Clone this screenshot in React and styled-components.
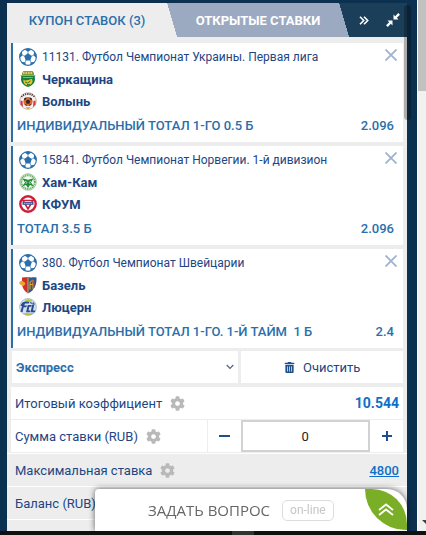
import { useState } from "react";
import styled, { createGlobalStyle } from "styled-components";
import { FaTrashAlt, FaCog } from "react-icons/fa";

const GlobalStyle = createGlobalStyle`
  * {
    box-sizing: border-box;
  }

  body {
    margin: 0;
    background-color: #0c304f;
    font-family: Roboto, "Liberation Sans", sans-serif;
    font-size: 13px;
    color: #1d4683;
    overflow: hidden;
  }

  button,
  input,
  select {
    font-family: inherit;
  }
`;

const Page = styled.div`
  display: flex;
  height: 100vh;
  padding: 3px 0 4px 7px;
`;

const Coupon = styled.main`
  flex: 1;
  min-width: 0;
  overflow: hidden;
  background-color: #ededed;
`;

const Gutter = styled.div`
  width: 10px;
`;

const PageScroll = styled.div`
  width: 9px;
  margin-top: -3px;
  border-left: 1px solid #fff;
  background-color: #f1f1f1;
  display: flex;
  flex-direction: column;
  justify-content: space-between;
`;

const PageThumb = styled.div`
  height: 91px;
  background-color: #c1c1c1;
`;

const ScrollArrow = styled.svg`
  width: 8px;
  height: 14px;
  fill: #404040;
`;

const Header = styled.header`
  display: flex;
  height: 34px;
  background-color: #1b3f58;
`;

const Tab = styled.button`
  height: 34px;
  padding: 0;
  border: 0;
  font-size: 13px;
  cursor: pointer;
  font-weight: ${(props) => (props.$active ? 500 : 700)};
  color: ${(props) => (props.$active ? "#2a6fab" : "#fff")};
  background-color: ${(props) => (props.$active ? "#ededed" : "#9ba9c1")};
  flex: ${(props) => (props.$active ? "160 1 0" : "182 1 0")};
  white-space: nowrap;

  ${(props) =>
    !props.$active &&
    `
    background: linear-gradient(to top right, #ededed 50%, #9ba9c1 51%) left / 10px 100% no-repeat,
      linear-gradient(to top right, #9ba9c1 50%, #1b3f58 51%) right / 10px 100% no-repeat,
      linear-gradient(#9ba9c1, #9ba9c1) center / calc(100% - 20px) 100% no-repeat;
  `}
`;

const HeaderTools = styled.div`
  display: flex;
  flex: 58 1 0;
`;

const IconButton = styled.button`
  display: flex;
  align-items: center;
  justify-content: center;
  padding: 0;
  border: 0;
  background: none;
  cursor: pointer;
  color: inherit;
`;

const ToolButton = styled(IconButton)`
  flex: 1;
  color: #fff;
`;

const InnerThumb = styled.div`
  position: absolute;
  top: 5px;
  right: 15px;
  width: 7px;
  height: 115px;
  border-radius: 4px;
  background-color: rgba(0, 0, 0, 0.27);
`;

const Bets = styled.ul`
  display: flex;
  flex-direction: column;
  gap: 4px;
  margin: 0;
  padding: 6px 4px 0;
  list-style: none;
`;

const BetCard = styled.li`
  height: 99px;
  padding: 3px 9px 0 4px;
  border-left: 2px solid #2a6fab;
  background-color: #fff;
`;

const BetLine = styled.div`
  display: flex;
  align-items: center;
  gap: 5px;
  height: 22px;
  padding-left: 2px;
  font-size: ${(props) => (props.$team ? "13px" : "12px")};
  font-weight: ${(props) => (props.$team ? 700 : 400)};
  white-space: nowrap;

  svg {
    flex: none;
  }
`;

const CloseButton = styled(IconButton)`
  align-self: flex-start;
  width: 12px;
  height: 18px;
  margin: 0 -3px 0 auto;
  color: #9fb2d0;
`;

const Market = styled.div`
  display: flex;
  justify-content: space-between;
  height: 28px;
  line-height: 28px;
  color: #2a6fab;
  font-weight: 500;
  white-space: pre;
`;

const Actions = styled.div`
  display: grid;
  grid-template-columns: 7fr 5fr;
  gap: 3px;
  padding: 3px 4px 4px 5px;
`;

const SelectBox = styled.label`
  display: grid;
  align-items: center;
  background-color: #fff;

  select,
  svg {
    grid-area: 1 / 1;
  }

  svg {
    justify-self: end;
    margin-right: 4px;
    pointer-events: none;
  }
`;

const TypeSelect = styled.select`
  appearance: none;
  width: 100%;
  height: 32px;
  padding: 0 4px;
  border: 0;
  background: none;
  color: #2a6fab;
  font-size: 13px;
  font-weight: 700;
`;

const ClearButton = styled(IconButton)`
  gap: 8px;
  height: 32px;
  background-color: #fff;
  font-size: 13px;

  svg {
    font-size: 11px;
    color: #1d4f8b;
  }
`;

const Row = styled.div`
  display: flex;
  align-items: center;
  justify-content: space-between;
  height: 33px;
  margin: ${(props) => (props.$grey ? "0" : "0 4px")};
  padding: ${(props) => (props.$grey ? "0 8px" : "0 4px")};
  border-bottom: 1px solid ${(props) => (props.$grey ? "#fff" : "#ededed")};
  background-color: ${(props) => (props.$grey ? "#ededed" : "#fff")};
`;

const StakeRow = styled(Row)`
  padding-right: 0;
`;

const StakeLabel = styled.div`
  display: flex;
  align-items: center;
  flex: 48 1 0;
  height: 32px;
  border-right: 1px solid #ededed;
`;

const Name = styled.span`
  display: inline-flex;
  align-items: center;
  gap: 8px;
  white-space: nowrap;

  svg {
    font-size: 15px;
    color: #b9b9b9;
  }
`;

const Total = styled.strong`
  font-size: 14px;
  color: #0f6fc6;
`;

const MaxLink = styled.a`
  font-size: 13px;
  font-weight: 500;
  color: #0f6fc6;
`;

const Stepper = styled.div`
  display: flex;
  flex: 49 1 0;
  min-width: 0;
  height: 32px;
`;

const StepButton = styled(IconButton)`
  width: 33px;
  color: #1d4f8b;
`;

const StakeInput = styled.input`
  flex: 1;
  min-width: 0;
  border: 2px solid #d2d2d2;
  background-color: #fff;
  text-align: center;
  font-size: 13px;
  color: #222;
`;

const Divider = styled.div`
  height: 1px;
  background-color: #fff;
`;

const Chat = styled.div`
  position: fixed;
  right: 19px;
  bottom: 4px;
  display: flex;
  align-items: center;
  width: 312px;
  height: 42px;
  padding-left: 53px;
  border-radius: 4px 20px 0 0;
  background-color: #fff;
  box-shadow: 0 0 6px rgba(0, 0, 0, 0.6);
  font-family: "Open Sans", "Noto Sans", sans-serif;
`;

const ChatTitle = styled.span`
  font-size: 15px;
  color: #666;
  white-space: nowrap;
`;

const Status = styled.span`
  height: 21px;
  margin-left: 12px;
  padding: 0 7px;
  border: 1px solid #ddd;
  border-radius: 5px;
  font-family: Roboto, sans-serif;
  font-size: 12px;
  line-height: 19px;
  color: #c6c6c6;
`;

const ChatToggle = styled(IconButton)`
  align-self: flex-start;
  width: 42px;
  height: 41px;
  margin-left: auto;
  border-radius: 0 36px 0 42px;
  background-color: #7aae27;
  color: #fff;
`;

const Taskbar = styled.div`
  position: fixed;
  right: 0;
  bottom: 0;
  left: 0;
  display: flex;
  justify-content: center;
  height: 4px;
  background-color: #101010;

  &::after {
    content: "";
    width: 22px;
    margin-left: 60px;
    background-color: #333;
  }
`;

function Ball() {
  return (
    <svg width="18" height="18" viewBox="0 0 18 18">
      <circle cx="9" cy="9" r="8.4" fill="#fff" stroke="#2a6fab" strokeWidth="1.1" />
      <path
        d="M9 5.300l3.800 2.800-1.500 4.400H6.700L5.200 8.100zM5.400 1.500L9 3.800l3.600-2.300C10.300.5 7.700.5 5.400 1.500zM.7 10l2.800-2.800L2.600 3.500C1 5.500.4 7.500.7 10zM17.300 10l-2.800-2.800.9-3.700c1.600 2 2.200 4 1.900 6.500zM2.300 14l4 .3.600 3c-1.900-.5-3.400-1.500-4.600-3.300zM15.700 14l-4 .3-.6 3c1.900-.5 3.400-1.500 4.600-3.300z"
        fill="#2a6fab"
      />
      <path d="M9 3v3M3 7l3 1.400M15 7l-3 1.400M7 12l-1 2.800M11 12l1 2.800" stroke="#2a6fab" strokeWidth=".6" />
    </svg>
  );
}

const crests = {
  cherkashchyna: (
    <>
      <path d="M4.500 1h9l1.500 2v3H3V3z" fill="#8d9b32" />
      <path d="M4 3h10" stroke="#f0e287" strokeWidth="1.500" strokeDasharray="1.500 1" />
      <path d="M1.500 5h15l-.8 1.500c1 5-.7 8.500-6.700 10.500-6-2-7.700-5.500-6.700-10.500z" fill="#15803c" />
      <path d="M2 5.500h14M4 7.500h10" stroke="#b9a63a" strokeWidth="1" />
      <path d="M4.500 9.500c2 2 3 .5 4.500.5s2-1.500 4-1c1.500 3-.5 6.300-4 6.300S4 12.500 4.500 9.500z" fill="#e7c32c" />
      <path d="M6 12l2.500 1 3-2M8 14.500h3" stroke="#38742b" strokeWidth="1" fill="none" />
    </>
  ),
  volyn: (
    <>
      <circle cx="9" cy="9" r="8.300" fill="#f6f1ee" stroke="#b3a5a4" strokeWidth=".8" />
      <path d="M2.500 5C5 1 13 1 15.500 5" stroke="#4c3538" strokeWidth="1.800" strokeDasharray="1.200 1" fill="none" />
      <path d="M1.500 8.500v4L4 15l-.5-6zM16.500 8.500v4L14 15l.5-6z" fill="#dd3541" />
      <circle cx="9" cy="9.500" r="4.600" fill="#e6672c" />
      <path d="M9 7.500l2.300 1.600-.9 2.700H7.600l-.9-2.700zM5 6.500l2-1 .5 1.200-2 1.800zM13 6.500l-2-1-.5 1.200 2 1.800zM5.300 12.500l2-.3.500 2zM12.700 12.500l-2-.3-.5 2z" fill="#30272a" />
      <path d="M6.500 15.300h5L9 17.300z" fill="#d4a91e" />
    </>
  ),
  hamkam: (
    <>
      <circle cx="9" cy="9" r="8.300" fill="#e2f0dc" stroke="#8ec18a" strokeWidth=".8" />
      <circle cx="9" cy="9" r="6.800" fill="none" stroke="#5aa659" strokeWidth="1.800" strokeDasharray="1 .8" />
      <circle cx="9" cy="9.300" r="5.200" fill="#fff" />
      <path d="M3.500 5.500l5 1 .5 1 .5-1 5-1-2.500 4 3 4-4-1.500L9 15l-2-3-4 1.500 3-4z" fill="#218b38" />
      <path d="M6 8l2 1.500L6.500 11M12 8l-2 1.500 1.500 1.500" stroke="#d7ecd2" strokeWidth=".8" fill="none" />
    </>
  ),
  kfum: (
    <>
      <circle cx="9" cy="9" r="7.700" fill="#fff" stroke="#cf1f37" strokeWidth="2.400" />
      <path d="M4 5.500h10L9 14z" fill="#fff" stroke="#cf1f37" strokeWidth="1.600" />
      <path d="M3.500 7h11v2.800h-11z" fill="#3e5797" />
      <path d="M5 8.400h8" stroke="#cbd5ec" strokeWidth=".8" strokeDasharray="1.500 .7" />
    </>
  ),
  basel: (
    <>
      <path d="M3 1.500L9 1v16.500C5 15 3 11.500 3 7z" fill="#cc3128" />
      <path d="M9 1c3 1 5 0 8.500.5C18 8 15.500 14.500 9 17.500z" fill="#31598f" />
      <path d="M.3 6l2.500-1.500L6.500 7 5 10l-2.500-.8L.5 8z" fill="#f0a42b" />
      <path d="M9 1v16M11 13.500V6l3-2v9M11 8.500h3" stroke="#e5a630" strokeWidth="1" fill="none" />
      <path d="M12.500 4l2.500 2v6" stroke="#cc3128" strokeWidth=".8" fill="none" />
    </>
  ),
  luzern: (
    <>
      <circle cx="9" cy="9" r="8.400" fill="#d9e1ec" stroke="#a3afc1" strokeWidth=".8" />
      <path d="M3.500 4.500c3-1.500 5-1.500 7-1L9.800 5.500H6l-.7 2H8l-.7 1.800H4.700L3.500 14H1.500L3 8H1.500l.7-1.800z" fill="#254b99" />
      <path d="M8.800 7h4l-.5 1.700h-2l-.8 3.800h2l-.6 1.800H7z" fill="#254b99" />
      <path d="M13.300 6.500h2L14 12.500h2.500l-.6 1.800H11.500z" fill="#254b99" />
      <path d="M6 2.300c2-1.300 5-1.300 7.300 0l-.8 1.200H7z" fill="#bac838" />
      <path d="M4 15.300h11L12 17H7z" fill="#afb944" />
      <path d="M11 4.500l2.500 1M14 4.500l1.500 2" stroke="#254b99" strokeWidth="1.200" />
    </>
  ),
};

function Crest({ name }) {
  return (
    <svg width="18" height="18" viewBox="0 0 18 18">
      {crests[name]}
    </svg>
  );
}

const bets = [
  {
    id: 11131,
    league: "Футбол Чемпионат Украины. Первая лига",
    teams: [
      { name: "Черкащина", crest: "cherkashchyna" },
      { name: "Волынь", crest: "volyn" },
    ],
    market: "ИНДИВИДУАЛЬНЫЙ ТОТАЛ 1-ГО 0.5 Б",
    odds: "2.096",
  },
  {
    id: 15841,
    league: "Футбол Чемпионат Норвегии. 1-й дивизион",
    teams: [
      { name: "Хам-Кам", crest: "hamkam" },
      { name: "КФУМ", crest: "kfum" },
    ],
    market: "ТОТАЛ 3.5 Б",
    odds: "2.096",
  },
  {
    id: 380,
    league: "Футбол Чемпионат Швейцарии",
    teams: [
      { name: "Базель", crest: "basel" },
      { name: "Люцерн", crest: "luzern" },
    ],
    market: "ИНДИВИДУАЛЬНЫЙ ТОТАЛ 1-ГО. 1-Й ТАЙМ  1 Б",
    odds: "2.4",
  },
];

function Bet({ bet }) {
  return (
    <BetCard>
      <BetLine>
        <Ball />
        {bet.id}. {bet.league}
        <CloseButton type="button" aria-label="Удалить">
          <svg width="12" height="12" viewBox="0 0 12 12">
            <path d="M.5.500l11 11M11.500.500l-11 11" stroke="currentColor" strokeWidth="1.800" />
          </svg>
        </CloseButton>
      </BetLine>
      {bet.teams.map((team) => (
        <BetLine key={team.name} $team>
          <Crest name={team.crest} />
          {team.name}
        </BetLine>
      ))}
      <Market>
        <span>{bet.market}</span>
        <span>{bet.odds}</span>
      </Market>
    </BetCard>
  );
}

function App() {
  const [stake, setStake] = useState(0);

  return (
    <>
      <GlobalStyle />
      <Page>
        <Coupon>
          <Header>
            <Tab type="button" $active>
              КУПОН СТАВОК (3)
            </Tab>
            <Tab type="button">ОТКРЫТЫЕ СТАВКИ</Tab>
            <HeaderTools>
              <ToolButton type="button" aria-label="Скрыть">
                <svg width="10" height="9" viewBox="0 0 10 9">
                  <path d="M1 .8l3.700 3.700L1 8.200M5 .8l3.700 3.700L5 8.200" fill="none" stroke="currentColor" strokeWidth="1.600" />
                </svg>
              </ToolButton>
              <ToolButton type="button" aria-label="Свернуть">
                <svg width="14" height="14" viewBox="0 0 14 14" fill="currentColor">
                  <path d="M7.500 1.500v5h5l-1.700-1.700L14 1.800 12.200 0l-3 3.200zM6.500 12.500v-5h-5l1.700 1.700L0 12.200 1.800 14l3-3.200z" />
                </svg>
              </ToolButton>
            </HeaderTools>
          </Header>
          <Bets>
            {bets.map((bet) => (
              <Bet key={bet.id} bet={bet} />
            ))}
          </Bets>
          <Actions>
            <SelectBox>
              <TypeSelect aria-label="Тип ставки">
                <option>Экспресс</option>
              </TypeSelect>
              <svg width="8" height="6" viewBox="0 0 8 6">
                <path d="M.7 1L4 4.300 7.300 1" fill="none" stroke="#54657c" strokeWidth="1.200" />
              </svg>
            </SelectBox>
            <ClearButton type="button">
              <FaTrashAlt />
              Очистить
            </ClearButton>
          </Actions>
          <Row>
            <Name>
              Итоговый коэффициент <FaCog />
            </Name>
            <Total>10.544</Total>
          </Row>
          <StakeRow>
            <StakeLabel>
              <Name as="label" htmlFor="stake">
                Сумма ставки (RUB) <FaCog />
              </Name>
            </StakeLabel>
            <Stepper>
              <StepButton type="button" aria-label="Меньше" onClick={() => setStake(Math.max(0, stake - 1))}>
                <svg width="12" height="12" viewBox="0 0 12 12">
                  <path d="M1 6h11" stroke="currentColor" strokeWidth="2" />
                </svg>
              </StepButton>
              <StakeInput id="stake" value={stake} onChange={(e) => setStake(Number(e.target.value) || 0)} />
              <StepButton type="button" aria-label="Больше" onClick={() => setStake(stake + 1)}>
                <svg width="12" height="12" viewBox="0 0 12 12">
                  <path d="M1 6h10M6 1v10" stroke="currentColor" strokeWidth="2" />
                </svg>
              </StepButton>
            </Stepper>
          </StakeRow>
          <Divider />
          <Row $grey>
            <Name>
              Максимальная ставка <FaCog />
            </Name>
            <MaxLink href="#stake">4800</MaxLink>
          </Row>
          <Row $grey>
            <Name>Баланс (RUB)</Name>
          </Row>
        </Coupon>
        <Gutter />
        <PageScroll>
          <PageThumb />
          <ScrollArrow viewBox="0 0 8 14">
            <path d="M4 3h8L8 7z" />
          </ScrollArrow>
        </PageScroll>
      </Page>
      <InnerThumb />
      <Chat>
        <ChatTitle>ЗАДАТЬ ВОПРОС</ChatTitle>
        <Status>on-line</Status>
        <ChatToggle type="button" aria-label="Открыть чат">
          <svg width="16" height="13" viewBox="0 0 16 13">
            <path d="M1 7l7-5.500L15 7M1 12l7-5.500 7 5.500" fill="none" stroke="currentColor" strokeWidth="1.800" />
          </svg>
        </ChatToggle>
      </Chat>
      <Taskbar />
    </>
  );
}

export default App;
